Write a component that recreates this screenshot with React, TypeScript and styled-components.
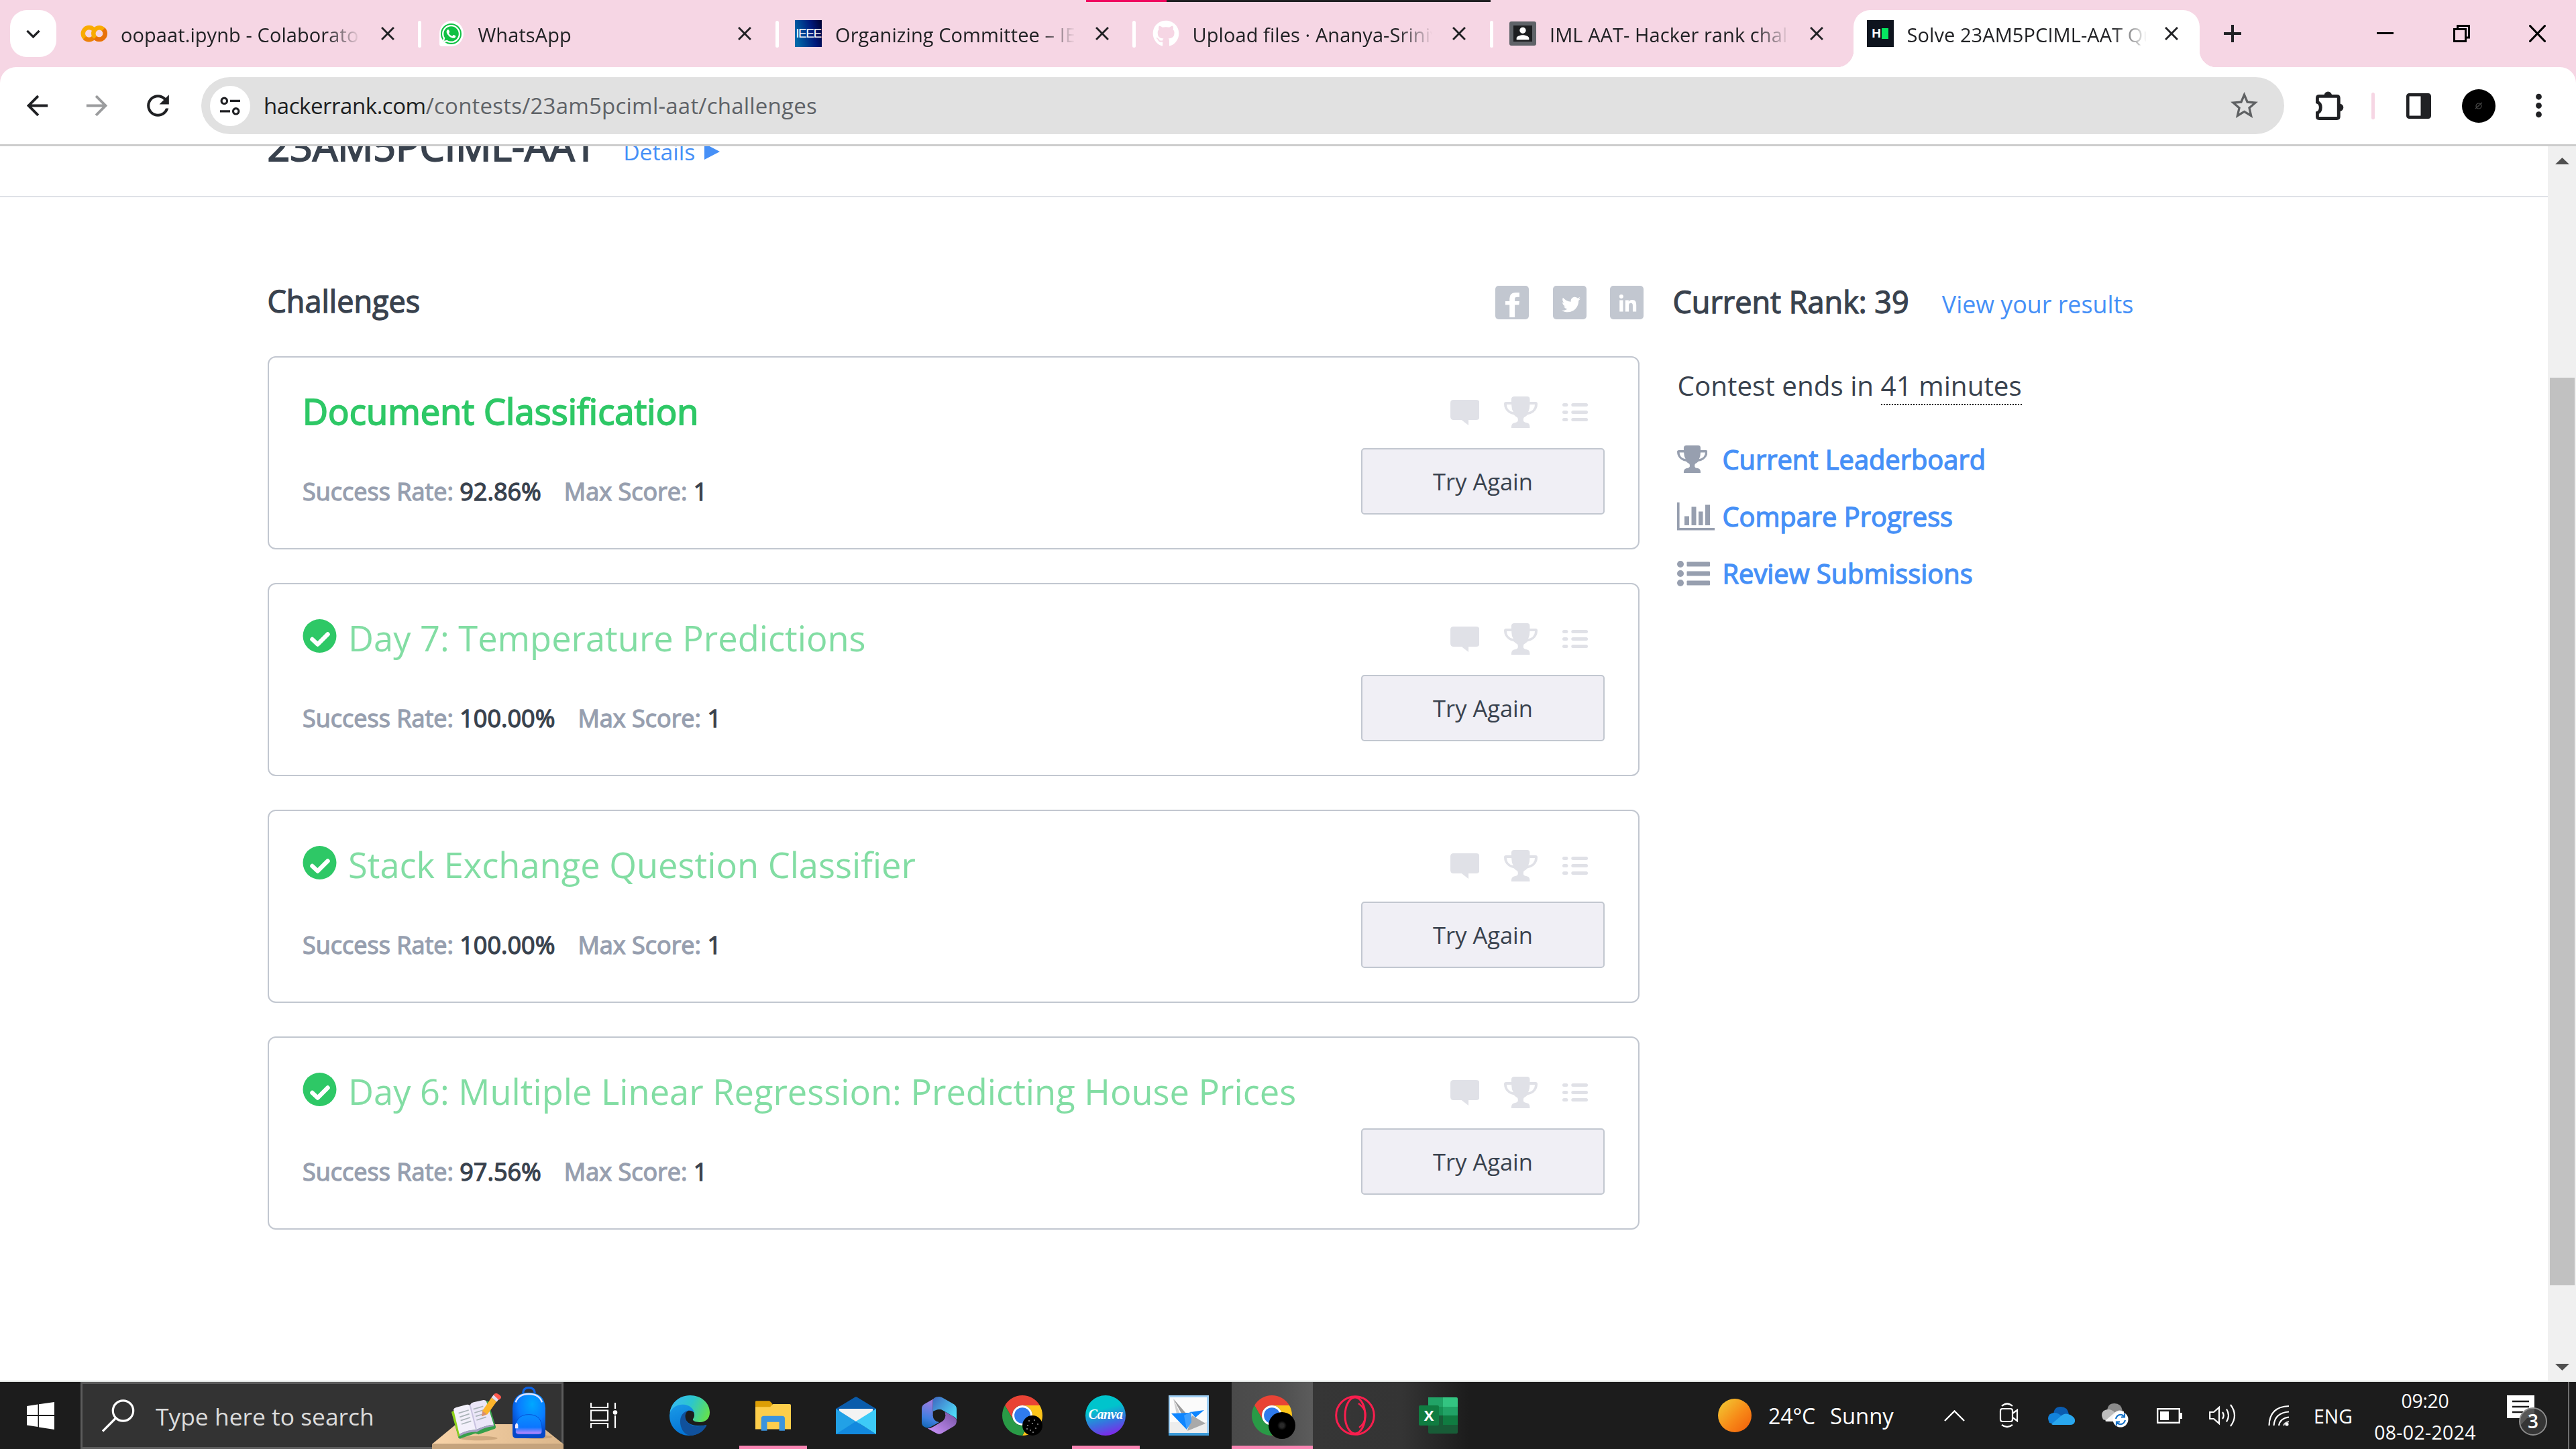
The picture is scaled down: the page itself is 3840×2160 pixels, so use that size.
import React from 'react';
import styled, { createGlobalStyle, css } from 'styled-components';
import {
  MdArrowBack, MdArrowForward, MdClose, MdExpandMore, MdMoreVert, MdRefresh, MdStarBorder, MdPerson,
} from 'react-icons/md';
import { FaGithub, FaLinkedinIn, FaTwitter, FaWhatsapp } from 'react-icons/fa';

const GlobalStyle = createGlobalStyle`
  *, *::before, *::after { box-sizing: border-box; }
  html, body { margin: 0; padding: 0; overflow: hidden; background: #fff; }
  body { font-family: "Open Sans", "Noto Sans", sans-serif; color: #39424e; }
  svg { display: block; flex: none; }
`;

const Screen = styled.div`
  width: 3840px;
  height: 2160px;
  display: flex;
  flex-direction: column;
  overflow: hidden;
  background: #fff;
`;

/* ---------- Tab strip ---------- */

const TabStrip = styled.header`
  position: relative;
  display: flex;
  height: 100px;
  background: #f6d6e4;
  color: #202124;
`;

const ShareBar = styled.div`
  position: absolute;
  top: 0;
  left: 1619px;
  width: 603px;
  height: 3px;
  background: linear-gradient(90deg, #f0065f 0 120px, #202022 120px);
`;

const TabSearch = styled.button`
  display: flex;
  align-items: center;
  justify-content: center;
  width: 69px;
  height: 70px;
  margin: 15px 8.5px 0 15px;
  padding: 0;
  border: 0;
  border-radius: 25px;
  background: #fff;
  color: #202124;
`;

const TabItem = styled.div<{ $active?: boolean }>`
  position: relative;
  display: flex;
  align-items: center;
  width: 532.5px;
  height: 100px;
  padding-left: 27.5px;
`;

const ActiveShape = styled.div`
  position: absolute;
  left: 8px;
  right: 9px;
  top: 15px;
  bottom: 0;
  border-radius: 25px 25px 0 0;
  background: #fff;
  &::before, &::after {
    content: "";
    position: absolute;
    bottom: 0;
    width: 25px;
    height: 25px;
  }
  &::before { left: -25px; background: radial-gradient(circle at 0 0, transparent 25px, #fff 25.5px); }
  &::after { right: -25px; background: radial-gradient(circle at 100% 0, transparent 25px, #fff 25.5px); }
`;

const Favicon = styled.div`
  position: relative;
  display: flex;
  align-items: center;
  justify-content: center;
  width: 40px;
  height: 40px;
`;

const TabTitle = styled.div`
  position: relative;
  width: 356px;
  margin-left: 20px;
  padding-top: 3px;
  overflow: hidden;
  white-space: pre;
  font-size: 29px;
  line-height: 44px;
  letter-spacing: 0.08px;
  mask-image: linear-gradient(90deg, #000 305px, transparent 358px);
`;

const TabClose = styled.div<{ $active?: boolean }>`
  position: relative;
  width: 34px;
  height: 34px;
  margin-left: ${(p) => (p.$active ? 21 : 24.5)}px;
`;

const TabDivider = styled.div`
  position: absolute;
  right: -3px;
  top: 31px;
  width: 5px;
  height: 40px;
  border-radius: 3px;
  background: #fff;
`;

const NewTab = styled.div`
  display: flex;
  align-items: center;
  margin-left: 27.5px;
`;

const WindowControls = styled.div`
  display: flex;
  align-items: center;
  gap: 88.5px;
  margin-left: auto;
  margin-right: 45px;
  padding-bottom: 1px;
`;

const IeeeIcon = styled(Favicon)`
  background: linear-gradient(75deg, #0067a8 10%, #00187a 65%, #000030);
  color: #fff;
  font: 400 19px/40px "Liberation Sans", sans-serif;
  letter-spacing: -1.5px;
`;

const WhatsappIcon = styled(Favicon)`
  width: 36px;
  height: 38px;
  margin: 0 2px;
  border-radius: 50% 50% 50% 10%;
  background: #fff;
  svg { border-radius: 50%; background: #10c143; color: #fff; }
`;

const ClassIcon = styled(Favicon)`
  height: 36px;
  border: 6px solid #5f6368;
  border-radius: 3px;
  background: #1c1e20;
  color: #fff;
`;

const RankIcon = styled(Favicon)`
  gap: 1px;
  background: #0e141e;
  color: #fff;
  font: 700 19px/20px "Liberation Sans", sans-serif;
`;

const RankBlock = styled.span`
  width: 10px;
  height: 16px;
  background: #05e660;
`;

/* ---------- Toolbar ---------- */

const ToolbarBack = styled.div`
  background: #f6d6e4;
`;

const Toolbar = styled.div`
  display: flex;
  align-items: center;
  height: 115px;
  border-radius: 24px 24px 0 0;
  background: #fff;
  color: #202124;
`;

const Slot = styled.div<{ $ml?: number; $w?: number; $color?: string }>`
  display: flex;
  align-items: center;
  justify-content: center;
  flex: none;
  margin-left: ${(p) => p.$ml ?? 0}px;
  width: ${(p) => (p.$w ? `${p.$w}px` : 'auto')};
  color: ${(p) => p.$color ?? 'inherit'};
`;

const Omnibox = styled.div`
  display: flex;
  align-items: center;
  width: 3105px;
  height: 85px;
  margin-left: 41px;
  padding: 0 35px 0 13px;
  border-radius: 43px;
  background: #e1e1e1;
`;

const SiteChip = styled.div`
  display: flex;
  align-items: center;
  justify-content: center;
  width: 60px;
  height: 60px;
  border-radius: 50%;
  background: #fff;
`;

const Url = styled.div`
  flex: 1;
  margin-left: 20px;
  white-space: pre;
  font-size: 33px;
  line-height: 50px;
  color: #5f6368;
  letter-spacing: 0.22px;
`;

const UrlHost = styled.span`
  color: #1d1f22;
  letter-spacing: -0.45px;
`;

const PinkDivider = styled.div`
  width: 5px;
  height: 40px;
  margin-left: 41px;
  border-radius: 3px;
  background: #f6d6e4;
`;

const Avatar = styled.div`
  display: flex;
  align-items: center;
  justify-content: center;
  width: 50px;
  height: 50px;
  margin-left: 46px;
  border-radius: 50%;
  background: #000;
`;

const ToolbarEdge = styled.div`
  height: 3px;
  background: #cdcdcd;
`;

/* ---------- Page ---------- */

const Viewport = styled.div`
  display: flex;
  height: 1840px;
`;

const Page = styled.main`
  width: 3798px;
  height: 1840px;
  overflow: hidden;
`;

const heavy = css`
  -webkit-text-stroke: 1.3px currentColor;
`;

const ContestBar = styled.div`
  display: flex;
  align-items: flex-start;
  height: 76px;
  padding-left: 398.5px;
  border-bottom: 2px solid #dfe2e7;
  overflow: hidden;
`;

const ContestName = styled.h1`
  ${heavy}
  margin: -31px 0 0;
  font-size: 59px;
  line-height: 60px;
  font-weight: 400;
  -webkit-text-stroke-width: 2px;
`;

const DetailsLink = styled.a`
  display: flex;
  align-items: center;
  gap: 13.5px;
  margin: -17px 0 0 40px;
  font-size: 33.7px;
  line-height: 50px;
  color: #4690f7;
`;

const Columns = styled.div`
  display: flex;
  padding: 124px 0 0 399px;
`;

const ChallengeColumn = styled.section`
  width: 2045px;
`;

const ColumnHead = styled.div`
  display: flex;
  align-items: center;
  justify-content: space-between;
  height: 66px;
  margin: 0 -6px 47px -0.5px;
`;

const SectionTitle = styled.h2`
  ${heavy}
  margin: 0;
  padding-bottom: 4px;
  font-size: 45px;
  line-height: 60px;
  font-weight: 400;
  white-space: pre;
`;

const Socials = styled.div`
  display: flex;
  gap: 35.5px;
`;

const SocialButton = styled.div<{ $x: number; $y: number }>`
  width: 50px;
  height: 50px;
  padding: ${(p) => p.$y}px 0 0 ${(p) => p.$x}px;
  border-radius: 5px;
  background: #c2c7d0;
  color: #fff;
`;

const Card = styled.article`
  display: flex;
  justify-content: space-between;
  height: 288px;
  margin-bottom: 50px;
  padding: 50px 50px 0 50px;
  border: 2px solid #c2c7d0;
  border-radius: 12px;
`;

const CardTitle = styled.h3<{ $solved: boolean }>`
  display: flex;
  align-items: center;
  gap: 17.5px;
  height: 60px;
  margin: 0;
  margin-left: ${(p) => (p.$solved ? -0.5 : 0)}px;
  font-size: 52.4px;
  line-height: 60px;
  font-weight: 400;
  white-space: pre;
  color: ${(p) => (p.$solved ? '#82dda3' : '#2ec866')};
  ${(p) => !p.$solved && css`-webkit-text-stroke: 1.8px currentColor; letter-spacing: 0.1px;`}
  svg { margin-top: -6px; }
`;

const Stats = styled.div`
  ${heavy}
  display: flex;
  gap: 34px;
  margin-top: 65px;
  font-size: 36px;
  line-height: 50px;
  white-space: pre;
  color: #979faf;
`;

const StatValue = styled.span`
  color: #39424e;
`;

const CardActions = styled.div`
  width: 363px;
  padding-top: 8px;
`;

const CardIcons = styled.div`
  display: flex;
  align-items: center;
  justify-content: flex-end;
  gap: 37px;
  height: 47px;
  padding-right: 25px;
  color: #e0e1e7;
`;

const TryButton = styled.button`
  display: block;
  width: 363px;
  height: 99px;
  margin-top: 30px;
  padding: 0;
  border: 2px solid #c2c7d0;
  border-radius: 5px;
  background: #f0eff5;
  color: #39424e;
  font: 400 34.5px/50px "Open Sans", sans-serif;
`;

const SideColumn = styled.aside`
  margin-left: 49.5px;
`;

const RankRow = styled.div`
  display: flex;
  align-items: baseline;
  gap: 49px;
  padding-top: 2px;
`;

const ResultsLink = styled.a`
  font-size: 35.8px;
  line-height: 60px;
  color: #4690f7;
`;

const EndsIn = styled.p`
  margin: 66px 0 42px 7px;
  font-size: 40.4px;
  line-height: 50px;
  white-space: pre;
`;

const TimeLeft = styled.span`
  border-bottom: 2px dotted #000;
`;

const SideLink = styled.a`
  ${heavy}
  display: flex;
  align-items: center;
  height: 85px;
  padding-left: 6px;
  font-size: 39.8px;
  line-height: 50px;
  color: #4690f7;
`;

const SideIcon = styled.span`
  width: 68px;
  color: #979faf;
`;

const ScrollTrack = styled.div`
  display: flex;
  flex-direction: column;
  align-items: center;
  width: 42px;
  padding-top: 17px;
  background: #f0f0f0;
`;

const ScrollThumb = styled.div`
  width: 37px;
  height: 1353px;
  margin: 318px 0 117px;
  background: #c1c1c1;
`;

const WindowEdge = styled.div`
  height: 2px;
  background: #e1e5e3;
`;

/* ---------- Taskbar ---------- */

const Taskbar = styled.footer`
  display: flex;
  height: 100px;
  background: linear-gradient(90deg, #1c1c1c 0 1957px, #363636 1957px, #343434 2090px, #1c1c1c 2190px);
  color: #fff;
`;

const SearchBox = styled.div`
  display: flex;
  align-items: center;
  width: 720px;
  height: 100px;
  border: 3px solid #5c5c5c;
  background: #333;
  padding-left: 29px;
`;

const SearchHint = styled.span`
  margin-left: 31px;
  padding-top: 2px;
  font-size: 35.4px;
  line-height: 50px;
  white-space: pre;
  color: #dcdcdc;
`;

const Desk = styled.svg`
  margin: 0 -3px 0 auto;
`;

const AppSlot = styled.div<{ $state?: 'open' | 'active' }>`
  position: relative;
  display: flex;
  align-items: center;
  justify-content: center;
  width: 124px;
  height: 100px;
  ${(p) => p.$state === 'active' && css`
    &::before {
      content: "";
      position: absolute;
      inset: 0 1px 0 2px;
      background: linear-gradient(90deg, #4a4a4a, #4f4f4f 60%, #5c5c5c);
    }
  `}
  ${(p) => p.$state && css`
    &::after {
      content: "";
      position: absolute;
      bottom: 0;
      left: ${p.$state === 'active' ? 2 : 12}px;
      right: ${p.$state === 'active' ? 1 : 11}px;
      height: 5px;
      background: #f985b3;
    }
  `}
  svg { position: relative; }
`;

const Apps = styled.div`
  display: flex;
  margin-left: 6px;
`;

const CanvaIcon = styled.div`
  width: 60px;
  height: 60px;
  border-radius: 50%;
  background: linear-gradient(165deg, #00c4cc 35%, #3a6fe0 65%, #7d2ae8 90%);
  text-align: center;
  font: italic 700 20px/56px "Liberation Serif", serif;
  letter-spacing: -0.5px;
`;

const Tray = styled.div`
  display: flex;
  align-items: center;
  margin-left: 355px;
`;

const Sun = styled.div`
  width: 50px;
  height: 50px;
  border-radius: 50%;
  background: linear-gradient(135deg, #f2c230 10%, #f78a18 55%, #f2650c 90%);
`;

const TrayText = styled.div<{ $ml: number; $w: number; $size: number; $ls?: number }>`
  margin-left: ${(p) => p.$ml}px;
  width: ${(p) => p.$w}px;
  padding-top: 1px;
  font-size: ${(p) => p.$size}px;
  letter-spacing: ${(p) => p.$ls ?? 0}px;
  line-height: 50px;
  white-space: pre;
`;

const Clock = styled.div`
  width: 160px;
  margin-left: 27px;
  padding-top: 3px;
  text-align: center;
  font-size: 28.4px;
  line-height: 47px;
`;

const ClockTime = styled.div`
  letter-spacing: -0.3px;
`;

const ClockDate = styled.div`
  letter-spacing: 0.35px;
`;

const Notice = styled.div`
  position: relative;
  width: 60px;
  height: 60px;
  margin-left: 42px;
`;

const NoticeCount = styled.div`
  position: absolute;
  right: 0;
  bottom: 0;
  width: 42px;
  height: 42px;
  border: 2px solid #8c8c8c;
  border-radius: 50%;
  background: rgba(58, 58, 58, 0.85);
  text-align: center;
  font-size: 28px;
  font-weight: 600;
  line-height: 37px;
`;

const ShowDesktop = styled.div`
  width: 2px;
  height: 100px;
  margin-left: 31px;
  background: #6f6f6f;
`;

/* ---------- Drawings ---------- */

const TrophyIcon = ({ w, h }: { w: number; h: number }) => (
  <svg width={w} height={h} viewBox="0 0 151 141" preserveAspectRatio="none" fill="currentColor" fillRule="evenodd">
    <path d="M33 12Q34 0 46 0H104Q116 0 116 12V24H142Q151 24 151 33Q151 58 131 72Q118 81 106 82Q98 90 90 94Q87 97 87 105Q87 115 97 116Q116 118 116 134V141H33V134Q34 118 53 116Q63 114 63 105Q63 97 60 94Q52 90 44 82Q33 81 20 72Q0 58 0 33Q0 24 9 24H33ZM12 36Q12 64 42 70Q33 56 34 36ZM139 36H116Q116 56 109 70Q138 64 139 36Z" />
  </svg>
);

const CommentIcon = () => (
  <svg width="43.5" height="38" viewBox="0 0 130 114" fill="currentColor">
    <path d="M14 0H116Q130 0 130 14V76Q130 90 116 90H81V114L50 90H14Q0 90 0 76V14Q0 0 14 0Z" />
  </svg>
);

const RowsIcon = () => (
  <svg width="38" height="27" viewBox="0 0 38 27" fill="currentColor">
    {[0, 11, 22].map((y) => (
      <g key={y}>
        <rect x="0" y={y} width="8.4" height="5" rx="2.5" />
        <rect x="13.3" y={y} width="24.7" height="5" rx="2.5" />
      </g>
    ))}
  </svg>
);

const ListIcon = () => (
  <svg width="49" height="38" viewBox="0 0 49 38" fill="currentColor">
    {[0, 14, 28].map((y) => (
      <g key={y}>
        <circle cx="5" cy={y + 5} r="5" />
        <rect x="14.5" y={y + 1.5} width="34.5" height="7" rx="1" />
      </g>
    ))}
  </svg>
);

const ChartIcon = () => (
  <svg width="56" height="42" viewBox="0 0 56 42" fill="currentColor">
    <path d="M0 0H3.6V38H56V41.5H0ZM11 20.5H18V34H11ZM21.5 6.5H28.5V34H21.5ZM32 13.5H38.5V34H32ZM42 3.5H49V34H42Z" />
  </svg>
);

const CheckIcon = () => (
  <svg width="51" height="50" viewBox="0 0 51 50">
    <circle cx="25.5" cy="25" r="25" fill="#2ec866" />
    <path d="M14.5 30L22.5 37.5L37.5 22.5" fill="none" stroke="#fff" strokeWidth="6.5" strokeLinecap="round" strokeLinejoin="round" />
  </svg>
);

const FacebookIcon = () => (
  <svg width="21" height="37" viewBox="0 0 64 112" fill="currentColor">
    <path d="M19 112V56H0V39H19V28Q19 0 46 0H64V20H52Q43 20 43 30V39H64L62 56H43V112Z" />
  </svg>
);

const ColabIcon = () => (
  <svg width="40" height="26" viewBox="0 0 40 26" fill="none" strokeWidth="6.5">
    <path d="M19 6.500A9 9 0 1 0 19 19.500" stroke="#f9ab00" />
    <circle cx="28" cy="13" r="8.7" stroke="#f9ab00" />
    <path d="M34.200 6.800A8.700 8.700 0 0 1 21.800 19.200" stroke="#e8710a" />
    <path d="M6 19.500A9 9 0 0 0 19 19.500" stroke="#e8710a" opacity="0.7" />
  </svg>
);

const TuneIcon = () => (
  <svg width="30" height="28" viewBox="0 0 30 28" fill="none" stroke="#202124" strokeWidth="3.2">
    <circle cx="6.3" cy="6.4" r="4.2" />
    <path d="M15 6.400H30M0 21.800H15" />
    <circle cx="23.7" cy="21.8" r="4.2" />
  </svg>
);

const PuzzleIcon = () => (
  <svg width="41.5" height="43" viewBox="0 0 120 124">
    <path d="M7 46V29Q7 21 15 21H91Q99 21 99 29V110Q99 117 91 117H15Q7 117 7 110V93Q21 88 21 70Q21 52 7 47Z" fill="none" stroke="#202124" strokeWidth="14" />
    <path d="M38 18A15 15 0 0 1 68 18ZM103 55A15 15 0 0 1 103 85Z" fill="#202124" stroke="#202124" strokeWidth="3" />
  </svg>
);

const PanelIcon = () => (
  <svg width="37" height="38" viewBox="0 0 37 38">
    <rect x="2.3" y="2.3" width="32.4" height="33.4" rx="2" fill="none" stroke="#202124" strokeWidth="4.6" />
    <rect x="21.5" y="2" width="13" height="34" fill="#202124" />
  </svg>
);

const StartIcon = () => (
  <svg width="41" height="41" viewBox="0 0 41 41" fill="#fff">
    <path d="M0 6L16.500 3.600V19H0ZM18 3.300L41 0V19H18ZM0 21H16.500V37L0 34.500ZM18 21H41V41L18 37.500Z" />
  </svg>
);

const MagnifierIcon = () => (
  <svg width="49" height="49" viewBox="0 0 49 49" fill="none" stroke="#fff" strokeWidth="3.2">
    <circle cx="31.5" cy="17" r="15.2" />
    <path d="M20.500 28L1 47.500" />
  </svg>
);

const DeskScene = () => (
  <Desk width="196" height="100" viewBox="42 12 588 300" preserveAspectRatio="none">
    <defs>
      <linearGradient id="wood" x1="0" x2="1"><stop offset="0" stopColor="#f8d3a8" /><stop offset="1" stopColor="#dcb78b" /></linearGradient>
      <radialGradient id="bag" cx="0.6" cy="0.25" r="0.7"><stop offset="0" stopColor="#00a8ff" /><stop offset="0.6" stopColor="#0a7bff" /><stop offset="1" stopColor="#0548c8" /></radialGradient>
      <linearGradient id="pocket" x1="0" y1="0" x2="0" y2="1"><stop offset="0" stopColor="#0a90ff" /><stop offset="0.65" stopColor="#0b76ff" /><stop offset="1" stopColor="#d08bff" /></linearGradient>
    </defs>
    <path d="M42 290L150 201H518L630 290Z" fill="url(#wood)" />
    <path d="M42 289H630V312H42Z" fill="#c5a37c" />
    <ellipse cx="250" cy="264" rx="85" ry="10" fill="#b9946a" opacity="0.6" />
    <ellipse cx="510" cy="258" rx="70" ry="9" fill="#b9946a" opacity="0.6" />
    <path d="M129 146L160 262Q163 268 172 264L236 242L250 247L322 222Q328 220 327 212L292 96Z" fill="#37a04b" />
    <path d="M129 146L140 140L168 250L160 258Z" fill="#8fd119" />
    <path d="M138 136Q140 128 150 126L195 114Q206 111 212 118L240 226Q210 226 164 245Z" fill="#f3f0fb" />
    <path d="M212 118Q215 106 228 103L272 93Q281 92 285 99L318 203Q278 206 240 226Z" fill="#ebe6f8" />
    <path d="M164 245Q205 225 240 226Q276 206 318 203L319 210Q276 214 242 236Q205 234 166 254Z" fill="#a7a0c4" />
    <path d="M212 116L240 226" stroke="#c9c2e0" strokeWidth="6" />
    <path d="M161 152L206 138M166 169L209 155M170 185L213 171M174 201L217 187M227 134L271 121M232 150L275 137M237 166L280 153M241 183L284 169" stroke="#aab3b8" strokeWidth="5" />
    <path d="M265 166L268 140L308 82L331 100L290 157Z" fill="#fdb52c" />
    <path d="M265 166L268 142L287 156Z" fill="#d88e70" />
    <path d="M308 82L317 70L341 88L332 101Z" fill="#e4dff0" />
    <path d="M317 70Q325 58 338 66Q355 76 350 85L341 93Z" fill="#ff5a4f" />
    <path d="M449 62Q450 38 475 38Q500 38 502 62" fill="none" stroke="#0a63e6" strokeWidth="10" />
    <path d="M402 130Q404 60 475 60Q546 60 549 130V245Q549 264 530 264H421Q402 264 402 245Z" fill="url(#bag)" />
    <path d="M416 103Q428 66 475 66Q522 66 534 103" fill="none" stroke="#dfe3ff" strokeWidth="7" />
    <path d="M415 222Q415 158 475 158Q534 158 534 222V232Q534 246 520 246H429Q415 246 415 232Z" fill="url(#pocket)" stroke="#0650d6" strokeWidth="3" />
    <path d="M414 204Q421 188 427 204V220H414Z" fill="#ece9ff" />
  </Desk>
);

const TaskViewIcon = () => (
  <svg width="41" height="40" viewBox="0 0 41 40" fill="none" stroke="#fff" strokeWidth="2.2">
    <path d="M1 1V8H26V1M1 39V32H26V39M1 12.500H26V27.500H1ZM37 1V10M37 20V39" />
    <circle cx="37" cy="15.5" r="2.2" fill="#fff" />
  </svg>
);

const EdgeIcon = () => (
  <svg width="60" height="60" viewBox="0 0 180 180">
    <defs>
      <linearGradient id="edgeTop" x1="0" y1="0.3" x2="1" y2="0.6"><stop offset="0" stopColor="#35b8f5" /><stop offset="0.5" stopColor="#2cc6cc" /><stop offset="1" stopColor="#63e04f" /></linearGradient>
      <linearGradient id="edgeBody" x1="0" y1="0" x2="0.4" y2="1"><stop offset="0" stopColor="#1a9be8" /><stop offset="1" stopColor="#0372d4" /></linearGradient>
    </defs>
    <path d="M1 78C8 28 48 0 92 0C142 0 180 34 180 76C180 106 160 121 134 120C112 119 100 112 106 104C112 96 114 82 104 70C90 48 40 40 1 78Z" fill="url(#edgeTop)" />
    <path d="M0 92C2 52 40 40 62 41C88 42 108 58 111 80C104 66 82 66 74 74C60 90 66 150 165 133C150 165 120 180 88 180C40 180 0 142 0 92Z" fill="url(#edgeBody)" />
    <path d="M86 68C66 76 68 104 78 116C98 140 130 144 162 132Q168 132 165 137C148 164 130 176 96 180C60 176 46 140 48 112C50 88 66 70 86 68Z" fill="#10519c" />
  </svg>
);

const ExplorerIcon = () => (
  <svg width="53" height="45" viewBox="0 0 158 133">
    <path d="M0 4Q0 0 6 0H60Q66 0 76 14V40H0Z" fill="#dd9f05" />
    <path d="M0 27H66L78 14H152Q158 14 158 20V126H0Z" fill="#fdce4b" />
    <path d="M26 133V78Q26 67 38 67H119Q131 67 131 78V133H106V94H52V133Z" fill="#3b94dd" />
  </svg>
);

const MailIcon = () => (
  <svg width="60" height="56" viewBox="0 0 180 168">
    <path d="M0 54L84 3Q90 -1 96 3L180 54V80H0Z" fill="#0a5cab" />
    <path d="M14 54H166L160 90L90 130L20 90Z" fill="#f3f3f3" />
    <path d="M0 54L180 168H4Q0 168 0 164Z" fill="#22a1e6" />
    <path d="M180 54L90 110L180 168Z" fill="#3dcbf7" />
    <path d="M0 168L90 110L180 168Z" fill="#1289de" />
  </svg>
);

const OfficeIcon = () => (
  <svg width="52" height="56" viewBox="0 0 156 168">
    <defs>
      <linearGradient id="offA" x1="0.5" y1="0" x2="0.3" y2="1"><stop offset="0" stopColor="#b37be0" /><stop offset="0.7" stopColor="#3f7fe0" /><stop offset="1" stopColor="#1668b8" /></linearGradient>
      <linearGradient id="offB" x1="0" y1="0" x2="1" y2="0.8"><stop offset="0" stopColor="#3d66c0" /><stop offset="1" stopColor="#50e0fb" /></linearGradient>
      <linearGradient id="offC" x1="0" y1="1" x2="1" y2="0"><stop offset="0" stopColor="#cf97ff" /><stop offset="1" stopColor="#7350a0" /></linearGradient>
    </defs>
    <path d="M70 0L12 33Q0 40 0 54V118Q0 132 18 138Q30 142 42 134L78 114Q50 104 50 78V14Z" fill="url(#offA)" />
    <path d="M50 66V20Q50 0 78 0Q86 0 94 5L144 34Q156 42 156 56V104Q152 92 140 88L92 60Q78 52 50 66Z" fill="url(#offB)" />
    <path d="M26 142Q40 142 52 134L92 110Q106 100 104 68L140 88Q156 98 156 108Q156 124 144 132L92 163Q78 171 64 163Z" fill="url(#offC)" />
    <circle cx="78" cy="85" r="28" fill="#1c1c1c" />
  </svg>
);

const ChromeIcon = ({ badge }: { badge: 'small' | 'large' }) => (
  <svg width="64" height="64" viewBox="0 0 64 64">
    <g transform="translate(2 2) scale(1.25)">
      <path d="M24 12H44.780A24 24 0 0 0 3.220 12L13.600 30A12 12 0 0 1 24 12Z" fill="#e94335" />
      <path d="M44.780 12A24 24 0 0 1 24 48L34.390 30A12 12 0 0 0 24 12Z" fill="#fcc419" />
      <path d="M3.220 12A24 24 0 0 0 24 48L34.390 30A12 12 0 0 1 13.600 30Z" fill="#299a46" />
      <circle cx="24" cy="24" r="12" fill="#fff" />
      <circle cx="24" cy="24" r="9.5" fill="#2f7bed" />
    </g>
    {badge === 'small' ? (
      <g>
        <circle cx="47" cy="47" r="15" fill="#000" />
        <g fill="#8a8a8a">
          {[[42, 40], [50, 39], [55, 45], [40, 47], [47, 44], [52, 51], [44, 54], [48, 57], [39, 52]].map(([x, y]) => (
            <circle key={`${x}-${y}`} cx={x} cy={y} r="1.1" />
          ))}
        </g>
      </g>
    ) : null}
  </svg>
);

const ProfileBadge = styled.div`
  position: absolute;
  left: 57px;
  top: 45px;
  width: 40px;
  height: 40px;
  border-radius: 50%;
  background: radial-gradient(circle, #2a2a2a 0 3px, #000 7px);
`;

const StarPageIcon = () => (
  <svg width="60" height="60" viewBox="0 0 60 60">
    <path d="M0 0H60V60H0Z" fill="#9fd0f5" />
    <path d="M2 3H57V56H2Z" fill="#fbfbfb" />
    <path d="M2 40H57V56H2Z" fill="#ededed" />
    <path d="M7 5L27 28L23 34Z" fill="#9b9b9b" />
    <path d="M7 5L20 34L12 28Z" fill="#d0d0d0" />
    <path d="M35 30L55 42L28 53Z" fill="#a9a9a9" />
    <path d="M4 27L30 26L27 51ZM33 25L53 22L40 33Z" fill="#0f86ff" />
    <path d="M23 30L34 24L34 40L27 51Z" fill="#3fa0ff" />
    <path d="M0 56H60V60H0Z" fill="#3d9bd9" />
  </svg>
);

const OperaIcon = () => (
  <svg width="60" height="60" viewBox="0 0 60 60" fill="none" stroke="#fa1e4e">
    <circle cx="30" cy="30" r="28.3" strokeWidth="3" />
    <ellipse cx="30" cy="30" rx="15" ry="27" strokeWidth="3" />
    <path d="M35 12Q46 20 45.500 30Q45 42 36 48" strokeWidth="2.4" />
  </svg>
);

const ExcelIcon = () => (
  <svg width="58" height="54" viewBox="0 0 58 54">
    <path d="M14 0H36V14H14Z" fill="#21a366" /><path d="M36 0H56Q58 0 58 2V14H36Z" fill="#33c481" />
    <path d="M14 14H36V27H14Z" fill="#169154" /><path d="M36 14H58V27H36Z" fill="#21a366" />
    <path d="M14 27H36V41H14Z" fill="#185c37" /><path d="M36 27H58V41H36Z" fill="#107c41" />
    <path d="M14 41H58V52Q58 54 56 54H16Q14 54 14 52Z" fill="#185c37" />
    <rect x="0" y="12" width="30" height="30" rx="2" fill="#107c41" />
    <text x="15" y="35" textAnchor="middle" fill="#fff" fontFamily="Open Sans, sans-serif" fontWeight="700" fontSize="22">X</text>
  </svg>
);

const CameraIcon = () => (
  <svg width="30" height="38" viewBox="0 0 30 38" fill="none" stroke="#fff" strokeWidth="2.2">
    <rect x="2" y="9" width="18" height="19" rx="3" />
    <path d="M20 16L27 11V27L20 22M4 5Q12 -2 20 5M4 33Q12 39 20 33" />
  </svg>
);

const CloudIcon = () => (
  <svg width="41" height="27" viewBox="0 0 41 27">
    <path d="M9 13Q9 0 20 0Q30 0 32 11L20 20Z" fill="#0a5cb0" />
    <path d="M3 24Q-2 14 6 10Q14 7 21 14L10 26Z" fill="#1283dc" />
    <path d="M6 26L20 14Q26 8 34 12Q42 16 41 22Q40 27 34 27H8Z" fill="#29a7ee" />
  </svg>
);

const SyncCloudIcon = () => (
  <svg width="42" height="37" viewBox="0 0 42 37">
    <path d="M9 13Q9 0 20 0Q30 0 32 11L20 20Z" fill="#8b8b8b" />
    <path d="M3 24Q-2 14 6 10Q14 7 21 14L10 26Z" fill="#bdbdbd" />
    <path d="M6 26L20 14Q26 8 34 12L34 27H8Z" fill="#f5f5f5" />
    <circle cx="29" cy="24" r="11.5" fill="#fff" />
    <path d="M22 23Q24 16 31 17L35 20M35 15V20.500H30M36 25Q34 32 27 31L23 28M23 33V27.500H28" fill="none" stroke="#1572c8" strokeWidth="2.2" />
  </svg>
);

const BatteryIcon = () => (
  <svg width="38" height="23" viewBox="0 0 38 23">
    <rect x="1.2" y="1.2" width="32.6" height="20.6" fill="none" stroke="#fff" strokeWidth="2.4" />
    <path d="M5 5H18V18H5ZM35 7H38V16H35Z" fill="#fff" />
  </svg>
);

const VolumeIcon = () => (
  <svg width="41" height="36" viewBox="0 0 41 36" fill="none" stroke="#fff" strokeWidth="2.2">
    <path d="M1.200 13H7L15 6V30L7 23H1.200ZM20 13Q23.500 18 20 23M26 8.500Q32 18 26 27.500M32 2Q44 18 32 34" />
  </svg>
);

const WifiIcon = () => (
  <svg width="32" height="32" viewBox="0 0 32 32" fill="none" stroke="#fff" strokeWidth="2.2">
    <path d="M1.500 31Q2 3 31 2M8.500 31Q10 12 31 10.500M16 31Q18 20 31 18.500" />
    <path d="M23 31Q24 27 31 25" opacity="0.8" />
    <circle cx="28" cy="29" r="2.6" fill="#fff" stroke="none" />
  </svg>
);

const NoteIcon = () => (
  <svg width="41" height="46" viewBox="0 0 41 46">
    <path d="M0 0H41V34H30L20 45V34H0Z" fill="#fff" />
    <path d="M8 9H33M8 17H33M8 25H24" stroke="#1c1c1c" strokeWidth="2.4" />
  </svg>
);

/* ---------- Data ---------- */

type Tab = { title: string; icon: React.ReactNode; active?: boolean; divider?: boolean };

const tabs: Tab[] = [
  { title: 'oopaat.ipynb - Colaboratory', icon: <Favicon><ColabIcon /></Favicon>, divider: true },
  { title: 'WhatsApp', icon: <WhatsappIcon><FaWhatsapp size={31} /></WhatsappIcon>, divider: true },
  { title: 'Organizing Committee – IEEE', icon: <IeeeIcon>IEEE</IeeeIcon>, divider: true },
  { title: 'Upload files · Ananya-Sriniva', icon: <Favicon><FaGithub size={40} color="#fff" /></Favicon>, divider: true },
  { title: 'IML AAT- Hacker rank challe', icon: <ClassIcon><MdPerson size={28} /></ClassIcon> },
  { title: 'Solve 23AM5PCIML-AAT Qu', icon: <RankIcon>H<RankBlock /></RankIcon>, active: true },
];

const challenges = [
  { title: 'Document Classification', rate: '92.86%', solved: false },
  { title: 'Day 7: Temperature Predictions', rate: '100.00%', solved: true },
  { title: 'Stack Exchange Question Classifier', rate: '100.00%', solved: true },
  { title: 'Day 6: Multiple Linear Regression: Predicting House Prices', rate: '97.56%', solved: true },
];

const ChallengeCard = ({ title, rate, solved }: { title: string; rate: string; solved: boolean }) => (
  <Card>
    <div>
      <CardTitle $solved={solved}>{solved && <CheckIcon />}<span>{title}</span></CardTitle>
      <Stats>
        <span>Success Rate: <StatValue>{rate}</StatValue></span>
        <span>Max Score: <StatValue>1</StatValue></span>
      </Stats>
    </div>
    <CardActions>
      <CardIcons><CommentIcon /><TrophyIcon w={50} h={47} /><RowsIcon /></CardIcons>
      <TryButton>Try Again</TryButton>
    </CardActions>
  </Card>
);

export default function App() {
  return (
    <Screen>
      <GlobalStyle />
      <TabStrip>
        <ShareBar />
        <TabSearch><MdExpandMore size={41} /></TabSearch>
        {tabs.map((t) => (
          <TabItem key={t.title}>
            {t.active && <ActiveShape />}
            {t.icon}
            <TabTitle>{t.title}</TabTitle>
            <TabClose $active={t.active}><MdClose size={34} /></TabClose>
            {t.divider && <TabDivider />}
          </TabItem>
        ))}
        <NewTab>
          <svg width="26" height="26" viewBox="0 0 26 26" stroke="#202124" strokeWidth="4"><path d="M13 0V26M0 13H26" /></svg>
        </NewTab>
        <WindowControls>
          <svg width="25" height="26" viewBox="0 0 25 26" stroke="#000" strokeWidth="3"><path d="M0 12.500H25" /></svg>
          <svg width="25" height="26" viewBox="0 0 25 26" fill="none" stroke="#000" strokeWidth="3"><path d="M1.500 6.500H18.500V24.500H1.500ZM6.500 6V1.500H23.500V19H19" /></svg>
          <svg width="25" height="26" viewBox="0 0 25 26" stroke="#000" strokeWidth="3"><path d="M0.500 0.500L24.500 25.500M24.500 0.500L0.500 25.500" /></svg>
        </WindowControls>
      </TabStrip>

      <ToolbarBack>
        <Toolbar>
          <Slot $ml={31.5} $w={47}><MdArrowBack size={47} /></Slot>
          <Slot $ml={42} $w={47} $color="#9b9c9e"><MdArrowForward size={47} /></Slot>
          <Slot $ml={43.5} $w={48}><MdRefresh size={49} /></Slot>
          <Omnibox>
            <SiteChip><TuneIcon /></SiteChip>
            <Url><UrlHost>hackerrank.com</UrlHost>/contests/23am5pciml-aat/challenges</Url>
            <Slot $color="#5f6163"><MdStarBorder size={49} /></Slot>
          </Omnibox>
          <Slot $ml={47}><PuzzleIcon /></Slot>
          <PinkDivider />
          <Slot $ml={47.5}><PanelIcon /></Slot>
          <Avatar>
            <svg width="12" height="12" viewBox="0 0 12 12" fill="none" stroke="#4a4a4a" strokeWidth="1.2"><circle cx="6" cy="6" r="4" /><path d="M1 10L11 1" /></svg>
          </Avatar>
          <Slot $ml={38}><MdMoreVert size={53} /></Slot>
        </Toolbar>
      </ToolbarBack>
      <ToolbarEdge />

      <Viewport>
        <Page>
          <ContestBar>
            <ContestName>23AM5PCIML-AAT</ContestName>
            <DetailsLink>
              Details
              <svg width="23" height="24" viewBox="0 0 23 24" fill="#4690f7"><path d="M0 0L23 12L0 24Z" /></svg>
            </DetailsLink>
          </ContestBar>
          <Columns>
            <ChallengeColumn>
              <ColumnHead>
                <SectionTitle>Challenges</SectionTitle>
                <Socials>
                  <SocialButton $x={15} $y={10}><FacebookIcon /></SocialButton>
                  <SocialButton $x={13} $y={13.5}><FaTwitter size={28} /></SocialButton>
                  <SocialButton $x={12} $y={12.5}><FaLinkedinIn size={29} /></SocialButton>
                </Socials>
              </ColumnHead>
              {challenges.map((c) => <ChallengeCard key={c.title} {...c} />)}
            </ChallengeColumn>
            <SideColumn>
              <RankRow>
                <SectionTitle>Current Rank: 39</SectionTitle>
                <ResultsLink>View your results</ResultsLink>
              </RankRow>
              <EndsIn>Contest ends in <TimeLeft>41 minutes</TimeLeft></EndsIn>
              <SideLink><SideIcon><TrophyIcon w={45.5} h={41} /></SideIcon>Current Leaderboard</SideLink>
              <SideLink><SideIcon><ChartIcon /></SideIcon>Compare Progress</SideLink>
              <SideLink><SideIcon><ListIcon /></SideIcon>Review Submissions</SideLink>
            </SideColumn>
          </Columns>
        </Page>
        <ScrollTrack>
          <svg width="21" height="10" viewBox="0 0 21 10" fill="#505050"><path d="M10.500 0L21 10H0Z" /></svg>
          <ScrollThumb />
          <svg width="21" height="10" viewBox="0 0 21 10" fill="#505050"><path d="M10.500 10L21 0H0Z" /></svg>
        </ScrollTrack>
      </Viewport>
      <WindowEdge />

      <Taskbar>
        <Slot $w={120}><StartIcon /></Slot>
        <SearchBox>
          <MagnifierIcon />
          <SearchHint>Type here to search</SearchHint>
          <DeskScene />
        </SearchBox>
        <Slot $w={120}><TaskViewIcon /></Slot>
        <Apps>
          <AppSlot><EdgeIcon /></AppSlot>
          <AppSlot $state="open"><ExplorerIcon /></AppSlot>
          <AppSlot><MailIcon /></AppSlot>
          <AppSlot><OfficeIcon /></AppSlot>
          <AppSlot><ChromeIcon badge="small" /></AppSlot>
          <AppSlot $state="open"><CanvaIcon>Canva</CanvaIcon></AppSlot>
          <AppSlot><StarPageIcon /></AppSlot>
          <AppSlot $state="active"><ChromeIcon badge="large" /><ProfileBadge /></AppSlot>
          <AppSlot><OperaIcon /></AppSlot>
          <AppSlot><ExcelIcon /></AppSlot>
        </Apps>
        <Tray>
          <Sun />
          <TrayText $ml={25} $w={73} $size={32} $ls={-0.1}>24°C</TrayText>
          <TrayText $ml={19} $w={98} $size={32.8}>Sunny</TrayText>
          <Slot $ml={72} $w={31}>
            <svg width="31" height="17" viewBox="0 0 31 17" fill="none" stroke="#fff" strokeWidth="2.4"><path d="M1 16L15.500 1.500L30 16" /></svg>
          </Slot>
          <Slot $ml={51} $w={30}><CameraIcon /></Slot>
          <Slot $ml={42} $w={41}><CloudIcon /></Slot>
          <Slot $ml={39} $w={42}><SyncCloudIcon /></Slot>
          <Slot $ml={41} $w={38}><BatteryIcon /></Slot>
          <Slot $ml={40} $w={40}><VolumeIcon /></Slot>
          <Slot $ml={48} $w={31}><WifiIcon /></Slot>
          <TrayText $ml={37} $w={59} $size={28.4}>ENG</TrayText>
          <Clock>
            <ClockTime>09:20</ClockTime>
            <ClockDate>08-02-2024</ClockDate>
          </Clock>
          <Notice>
            <NoteIcon />
            <NoticeCount>3</NoticeCount>
          </Notice>
          <ShowDesktop />
        </Tray>
      </Taskbar>
    </Screen>
  );
}
